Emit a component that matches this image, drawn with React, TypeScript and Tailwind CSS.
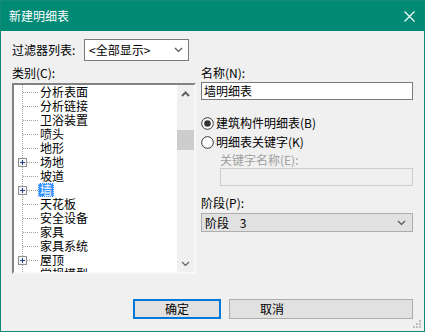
const font = { fontFamily: '"Noto Sans CJK SC", "Noto Sans", sans-serif' };

type Row = { label: string; plus?: boolean; selected?: boolean };

const rows: Row[] = [
  { label: "分析表面" },
  { label: "分析链接" },
  { label: "卫浴装置" },
  { label: "喷头" },
  { label: "地形" },
  { label: "场地", plus: true },
  { label: "坡道" },
  { label: "墙", plus: true, selected: true },
  { label: "天花板" },
  { label: "安全设备" },
  { label: "家具" },
  { label: "家具系统" },
  { label: "屋顶", plus: true },
  { label: "常规模型" },
];

const Chevron = ({ up = false, color = "#606060" }: { up?: boolean; color?: string }) => (
  <svg width="9" height="6" viewBox="0 0 9 6">
    <path
      d={up ? "M1 5 L4.5 1.5 L8 5" : "M1 1 L4.5 4.5 L8 1"}
      fill="none"
      stroke={color}
      strokeWidth={up ? 2 : 1.2}
    />
  </svg>
);

const TreeConnector = ({ plus }: { plus?: boolean }) => (
  <svg width="24" height="14" viewBox="0 0 24 14" className="shrink-0">
    <line x1="8.5" y1="0" x2="8.5" y2="14" stroke="#a0a0a0" strokeDasharray="1 1" />
    <line x1="9" y1="7.5" x2="24" y2="7.5" stroke="#a0a0a0" strokeDasharray="1 1" />
    {plus && (
      <g>
        <rect x="4.5" y="3.5" width="8" height="8" fill="#f4f4f4" stroke="#919191" />
        <line x1="6" y1="7.5" x2="11" y2="7.5" stroke="#1e3f8f" />
        <line x1="8.5" y1="5" x2="8.5" y2="10" stroke="#1e3f8f" />
      </g>
    )}
  </svg>
);

const Radio = ({ checked }: { checked?: boolean }) => (
  <svg width="13" height="13" viewBox="0 0 13 13" className="shrink-0">
    <circle cx="6.5" cy="6.5" r="5.8" fill="#fff" stroke="#333" />
    {checked && <circle cx="6.5" cy="6.5" r="3.3" fill="#333" />}
  </svg>
);

const App = () => {
  return (
    <div
      className="relative w-[425px] h-[332px] border border-[#128a78] bg-[#f0f0f0] flex flex-col text-[12px] text-black overflow-hidden"
      style={font}
    >
      {/* title bar */}
      <div className="h-[30px] bg-[#008a76] flex items-center justify-between pl-[8px] pr-[9px] text-white">
        <span className="text-[12px] leading-[14px]">新建明细表</span>
        <svg width="11" height="11" viewBox="0 0 11 11">
          <path d="M0.5 0.5 L10.5 10.5 M10.5 0.5 L0.5 10.5" stroke="#fff" strokeWidth="1.1" />
        </svg>
      </div>

      <div className="flex flex-col pl-[11px]">
        {/* filter */}
        <div className="mt-[8px] flex items-center h-[22px]">
          <span className="w-[72px] leading-[14px]">过滤器列表:</span>
          <div className="w-[105px] h-[22px] border border-[#7a7a7a] bg-white flex items-center justify-between pl-[4px] pr-[5px]">
            <span className="leading-[14px]">&lt;全部显示&gt;</span>
            <Chevron color="#555" />
          </div>
        </div>

        <div className="mt-[5px] flex">
          {/* left column */}
          <div className="w-[184px] flex flex-col">
            <span className="h-[14px] leading-[14px]">类别(C):</span>
            <div className="mt-[3px] h-[191px] border-2 border-t-[#838383] border-l-[#838383] border-b-[#f8f8f8] border-r-[#f8f8f8] bg-white flex">
              <div className="flex-1 overflow-hidden flex flex-col">
                {rows.map((r) => (
                  <div key={r.label} className="h-[14px] flex items-center shrink-0">
                    <TreeConnector plus={r.plus} />
                    <span
                      className={
                        r.selected
                          ? "px-[2px] h-[14px] leading-[14px] bg-[#3390ff] text-white outline outline-1 outline-dotted outline-[#cfe3ff] -outline-offset-1"
                          : "px-[2px] h-[14px] leading-[14px]"
                      }
                    >
                      {r.label}
                    </span>
                  </div>
                ))}
              </div>
              <div className="w-[17px] bg-[#f0f0f0] flex flex-col items-center">
                <div className="h-[17px] flex items-center justify-center">
                  <Chevron up />
                </div>
                <div className="mt-[28px] w-[17px] h-[20px] bg-[#cdcdcd]" />
                <div className="flex-1" />
                <div className="h-[17px] flex items-center justify-center">
                  <Chevron color="#606060" />
                </div>
              </div>
            </div>
          </div>

          {/* right column */}
          <div className="ml-[5px] w-[212px] flex flex-col">
            <span className="h-[14px] leading-[14px]">名称(N):</span>
            <div className="mt-[2px] h-[18px] border border-[#7a7a7a] bg-white flex items-center pl-[2px]">
              <span className="leading-[14px]">墙明细表</span>
            </div>
            <div className="mt-[16px] h-[14px] flex items-center gap-[2px]">
              <Radio checked />
              <span className="leading-[14px]">建筑构件明细表(B)</span>
            </div>
            <div className="mt-[5px] h-[14px] flex items-center gap-[2px]">
              <Radio />
              <span className="leading-[14px]">明细表关键字(K)</span>
            </div>
            <span className="mt-[4px] h-[14px] leading-[14px] pl-[19px] text-[#a0a0a0]">关键字名称(E):</span>
            <div className="mt-[1px] ml-[19px] h-[18px] border border-[#cccccc] bg-[#f0f0f0]" />
            <span className="mt-[10px] h-[14px] leading-[14px]">阶段(P):</span>
            <div className="mt-[3px] h-[19px] border border-[#adadad] bg-[#e1e1e1] flex items-center justify-between pl-[3px] pr-[6px]">
              <span className="leading-[14px] whitespace-pre">阶段    3</span>
              <Chevron color="#555" />
            </div>
          </div>
        </div>

        {/* buttons */}
        <div className="mt-[25px] flex">
          <div className="ml-[121px] w-[88px] h-[20px] border-2 border-[#0078d7] bg-[#e1e1e1] flex items-center justify-center">
            <span className="leading-[14px]">确定</span>
          </div>
          <div className="ml-[8px] w-[184px] h-[20px] border border-[#adadad] bg-[#e1e1e1] flex items-center pl-[30px]">
            <span className="leading-[14px]">取消</span>
          </div>
        </div>
      </div>

      {/* resize grip */}
      <svg width="9" height="9" viewBox="0 0 9 9" className="absolute right-[3px] bottom-[3px]">
        <rect x="7" y="1" width="2" height="2" fill="#bdbdbd" />
        <rect x="4" y="4" width="2" height="2" fill="#bdbdbd" />
        <rect x="7" y="4" width="2" height="2" fill="#bdbdbd" />
        <rect x="1" y="7" width="2" height="2" fill="#bdbdbd" />
        <rect x="4" y="7" width="2" height="2" fill="#bdbdbd" />
        <rect x="7" y="7" width="2" height="2" fill="#bdbdbd" />
      </svg>
    </div>
  );
};

export default App;
